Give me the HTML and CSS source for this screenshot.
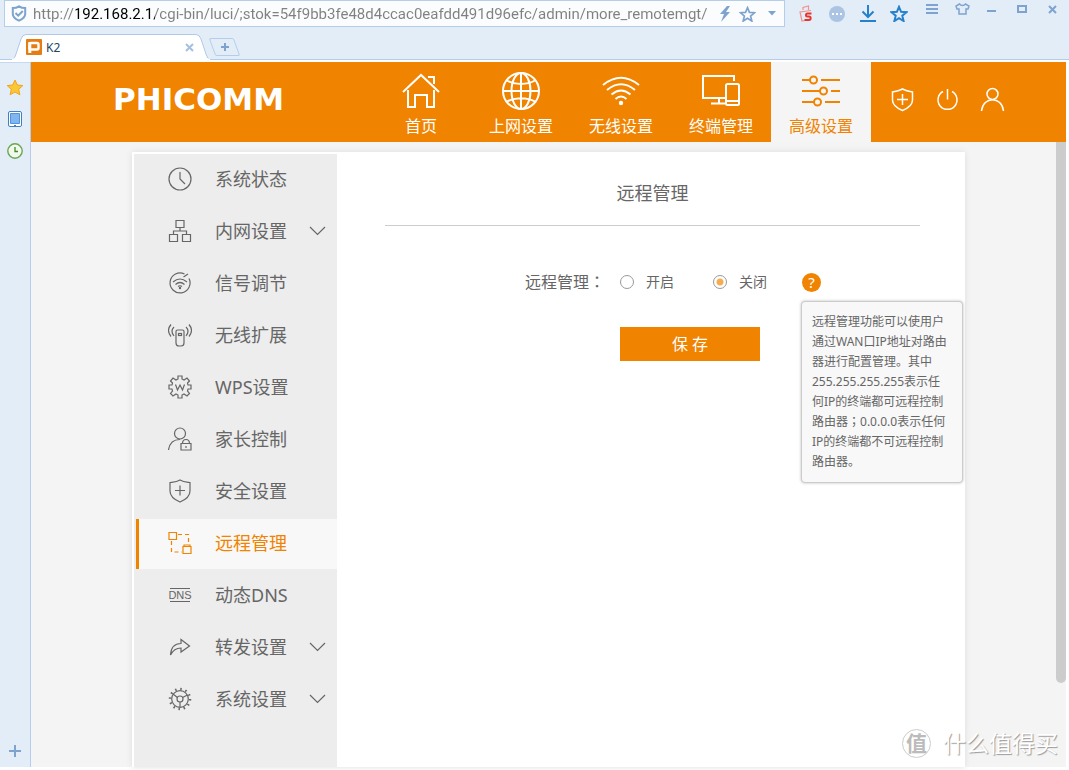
FILE: index.html
```html
<!DOCTYPE html>
<html lang="zh-CN">
<head>
<meta charset="utf-8">
<title>K2</title>
<link rel="stylesheet" href="styles.css">
</head>
<body>
<header class="browser">
  <div class="browser-row">
    <div class="address">
      <svg class="address-shield" width="16" height="17" viewBox="0 0 16 17" fill="none" stroke="#7fa3cf" stroke-width="2"><path d="M8 1.3C6 2.6 4 3 1.8 3v6c0 3 2.500 5 6.200 6.600C11.700 14 14.200 12 14.200 9V3C12 3 10 2.600 8 1.300z"/><path d="M4.500 8l2.700 2.700L11.800 6"/></svg>
      <input class="address-input" type="text" aria-label="地址栏" value="http://192.168.2.1/cgi-bin/luci/;stok=54f9bb3fe48d4ccac0eafdd491d96efc/admin/more_remotemgt/">
      <svg width="12" height="16" viewBox="0 0 12 16" fill="#7fa3cf"><path d="M8 0L1 8h4L2 16l9-10H7l4-6z"/></svg>
      <svg width="17" height="16" viewBox="0 0 18 17" fill="none" stroke="#7fa3cf" stroke-width="1.800"><path d="M9 1.800l2.100 5 5.300.4-4.100 3.500 1.300 5.300L9 13.100 4.400 16l1.300-5.300L1.600 7.200l5.300-.4z"/></svg>
      <svg class="address-caret" width="8" height="5" viewBox="0 0 8 5" fill="#7fa3cf"><path d="M0 0h8L4 4.500z"/></svg>
    </div>
    <div class="tools">
      <button class="tool" aria-label="搜狗"><svg width="14" height="18" viewBox="0 0 14 18" fill="none" stroke="#e8352c"><path d="M4 5V2.500L9.500 1v4M12 5.500L1 7l2 9 3-.5" stroke="#f0938d" stroke-width="1.200"/><path d="M12.500 8.500H8.500C6.500 8.500 6.500 11.500 8.500 11.500h1.500c2.200 0 2.200 3.500 0 3.500H5.500" stroke-width="2"/></svg></button>
      <button class="tool" aria-label="更多"><svg width="16" height="16" viewBox="0 0 16 16"><circle cx="8" cy="8" r="8" fill="#abc4e3"/><g fill="#fff"><rect x="3" y="7" width="2" height="2"/><rect x="7" y="7" width="2" height="2"/><rect x="11" y="7" width="2" height="2"/></g></svg></button>
      <button class="tool" aria-label="下载"><svg width="16" height="17" viewBox="0 0 16 17" fill="none" stroke="#2581cb" stroke-width="2"><path d="M0 16h16M8 0v12M2.500 6.500L8 12l5.500-5.500"/></svg></button>
      <button class="tool" aria-label="收藏"><svg width="18" height="17" viewBox="0 0 18 17" fill="none" stroke="#2581cb" stroke-width="2"><path d="M9 1.800l2.100 5 5.300.4-4.100 3.500 1.300 5.300L9 13.100 4.400 16l1.300-5.300L1.600 7.200l5.300-.4z"/></svg></button>
    </div>
    <div class="window-buttons">
      <button class="tool" aria-label="菜单"><svg width="12" height="10" viewBox="0 0 12 10" stroke="#7fa3cf" stroke-width="2"><path d="M0 1h12M0 5h12M0 9h12"/></svg></button>
      <button class="tool" aria-label="皮肤"><svg width="15" height="12" viewBox="0 0 15 12" fill="none" stroke="#7fa3cf" stroke-width="1.500"><path d="M4.500 1L1 3l1 3h2v5h7V6h2l1-3-3.500-2C9 3 6 3 4.500 1z"/></svg></button>
      <button class="tool" aria-label="最小化"><svg width="10" height="10" viewBox="0 0 10 10" stroke="#7fa3cf" stroke-width="2"><path d="M0 7h9"/></svg></button>
      <button class="tool" aria-label="最大化"><svg width="10" height="8" viewBox="0 0 10 8" fill="none" stroke="#7fa3cf" stroke-width="2"><path d="M1 1h8v6H1z"/></svg></button>
      <button class="tool" aria-label="关闭窗口"><svg width="9" height="9" viewBox="0 0 9 9" stroke="#7fa3cf" stroke-width="2"><path d="M1 1l7 7M8 1L1 8"/></svg></button>
    </div>
  </div>
  <div class="tabs">
    <div class="tab">
      <svg class="tab-shape" viewBox="0 0 198 26" preserveAspectRatio="none"><path d="M0 25.500C2 25 3 23 4 20L9 5Q10.500.500 14 .500H184Q187.500.500 189 5L194 20Q195.500 25 198 25.500V26H0z" fill="#fff" stroke="#afc9e8"/><path d="M0 25.500H198" stroke="#fff" stroke-width="2"/></svg>
      <svg width="16" height="16" viewBox="0 0 16 16"><rect width="16" height="16" rx="1" fill="#e57d12"/><rect x="3.500" y="4" width="9" height="6.500" rx="1.500" fill="none" stroke="#fff" stroke-width="2.400"/><path d="M2.300 3h3v11h-3z" fill="#fff"/></svg>
      <span class="tab-name">K2</span>
      <button class="tab-close" aria-label="关闭标签"><svg width="9" height="9" viewBox="0 0 9 9" stroke="#a5c0e0" stroke-width="2"><path d="M1 1l7 7M8 1L1 8"/></svg></button>
    </div>
    <button class="tab-new" aria-label="新建标签"><svg width="8" height="8" viewBox="0 0 8 8" stroke="#7fa3cf" stroke-width="2"><path d="M4 0v8M0 4h8"/></svg></button>
  </div>
</header>

<div class="window">
  <aside class="dock">
    <button class="dock-button" aria-label="收藏夹"><svg width="18" height="17" viewBox="0 0 18 17"><path d="M9 1l2.300 5 5.500.600-4.100 3.700 1.200 5.500L9 13l-4.900 2.800 1.200-5.500L1.200 6.600 6.700 6z" fill="#fcc735" stroke="#efa51c"/></svg></button>
    <button class="dock-button" aria-label="手机"><svg width="14" height="16" viewBox="0 0 14 16"><rect x=".5" y=".5" width="13" height="15" rx="1.500" fill="#fff" stroke="#3f7fc4"/><path d="M2.500 2.500h9v10h-9z" fill="#7fb6ef" stroke="#5593d8"/><path d="M6 14.500h2" stroke="#3f7fc4"/></svg></button>
    <button class="dock-button" aria-label="历史"><svg width="16" height="16" viewBox="0 0 16 16" fill="none"><circle cx="8" cy="8" r="7.200" fill="#f1f9ea" stroke="#6ba556" stroke-width="1.400"/><path d="M8 4v4.500h3" stroke="#418a2b" stroke-width="1.300"/></svg></button>
    <button class="dock-button dock-add" aria-label="添加"><svg width="12" height="12" viewBox="0 0 12 12" stroke="#7fa3cf" stroke-width="2"><path d="M6 0v12M0 6h12"/></svg></button>
  </aside>

  <div class="page">
    <header class="top">
      <a class="logo" href="#">PHICOMM</a>
      <nav class="nav">
        <a class="nav-item" href="#"><svg width="38" height="38" viewBox="0 0 38 38" fill="none" stroke="#fff" stroke-width="2"><path d="M1 20L19 3l18 17M6 18v17h7V23h12v12h7V18M26 5h6v7"/></svg>首页</a>
        <a class="nav-item" href="#"><svg width="38" height="38" viewBox="0 0 38 38" fill="none" stroke="#fff" stroke-width="2"><circle cx="19" cy="19" r="18"/><ellipse cx="19" cy="19" rx="9.500" ry="18"/><path d="M19 1v36M1 19h36M5 8.500c8 4.500 20 4.500 28 0M5 29.500c8-4.500 20-4.500 28 0"/></svg>上网设置</a>
        <a class="nav-item" href="#"><svg width="38" height="38" viewBox="0 0 38 38" fill="none" stroke="#fff" stroke-width="2"><path d="M1 13Q19-1.500 37 13M5 18q14-11.500 28 0M9.500 22.500q9.500-8 19 0M13.500 27q5.500-5 11 0"/><circle cx="19" cy="31" r="2.200" fill="#fff" stroke="none"/></svg>无线设置</a>
        <a class="nav-item" href="#"><svg width="38" height="38" viewBox="0 0 38 38" fill="none" stroke="#fff" stroke-width="2"><path d="M23 26H1V4h31v5M17 26v5M9 31.500h14"/><rect x="24" y="12" width="13" height="21" rx="1.500"/><path d="M24 29h13"/></svg>终端管理</a>
        <a class="nav-item nav-item-active" href="#"><svg width="38" height="38" viewBox="0 0 38 38" fill="none" stroke="#f08300" stroke-width="2"><path d="M0 8h8M19 8h19M0 19h18M29 19h9M0 30h12M23 30h15"/><circle cx="11.500" cy="8" r="3.500"/><circle cx="21.500" cy="19" r="3.500"/><circle cx="15.500" cy="30" r="3.500"/></svg>高级设置</a>
      </nav>
      <div class="quick">
        <button class="quick-button" aria-label="安全"><svg width="25" height="25" viewBox="0 0 25 25" fill="none" stroke="#fff" stroke-width="1.500"><path d="M12.500 2C9 4 6 4.500 2.500 5v8c0 5 4 8 10 10.500 6-2.500 10-5.500 10-10.500V5C19 4.500 16 4 12.500 2zM12.500 7v11M7 12.500h11"/></svg></button>
        <button class="quick-button" aria-label="退出"><svg width="25" height="25" viewBox="0 0 25 25" fill="none" stroke="#fff" stroke-width="1.500"><path d="M8 4.500a9.500 9.500 0 1 0 9 0M12.500 2v10.500"/></svg></button>
        <button class="quick-button" aria-label="用户"><svg width="25" height="25" viewBox="0 0 25 25" fill="none" stroke="#fff" stroke-width="1.500"><circle cx="12.500" cy="7" r="5.500"/><path d="M1.500 24c1.500-15 20.500-15 22 0"/></svg></button>
      </div>
    </header>

    <div class="panel">
      <nav class="side">
        <a class="side-item" href="#"><svg class="icon" viewBox="0 0 24 24"><circle cx="12" cy="12" r="11"/><path d="M12 5v7l5 5"/></svg>系统状态</a>
        <a class="side-item" href="#"><svg class="icon" viewBox="0 0 24 24"><path d="M8 1.500h8v7H8zM1.500 15.500h8v7h-8zM14.500 15.500h8v7h-8zM12 8.500V12M5.500 15.500V12h13v3.500"/></svg>内网设置<svg class="chevron" viewBox="0 0 17 10"><path d="M1 1l7.500 7.500L16 1"/></svg></a>
        <a class="side-item" href="#"><svg class="icon" viewBox="0 0 24 24"><path d="M16.500 3A10 10 0 1 0 21 7.500M15.500 6L20 3M5 11q7-6 14 0M7.500 13.500q4.500-4 9 0M10 15.500q2-1.500 4 0"/><circle cx="12" cy="17" r=".6"/></svg>信号调节</a>
        <a class="side-item" href="#"><svg class="icon" viewBox="0 0 24 24"><path d="M8 8.500q0-1.500 1.500-1.500h5q1.500 0 1.500 1.500V20q0 3-3 3h-2q-3 0-3-3z"/><rect x="10.500" y="10.500" width="3" height="2"/><path d="M6 4q-4 4 0 9M3 1.500q-5 6 0 12M18 4q4 4 0 9M21 1.500q5 6 0 12"/></svg>无线扩展</a>
        <a class="side-item" href="#"><svg class="icon" viewBox="0 0 24 24"><path d="M10 1h4v3l2 1 3-2 2.500 3L19.500 8l.5 2h3v4h-3l-.5 2 2 2.500L19 21l-3-2-2 1v3h-4v-3l-2-1-3 2-2.500-2.500 2-2.500L4 14H1v-4h3l.5-2-2-2L5 3l3 2 2-1z"/><path d="M7.500 9.500l2 5.500L12 10l2.500 5 2-5.500"/></svg>WPS设置</a>
        <a class="side-item" href="#"><svg class="icon" viewBox="0 0 24 24"><circle cx="12" cy="6.500" r="5.500"/><path d="M.5 23c1-7 5-10.500 11.500-10.500M13 16.500h10v6.500H13zM14.500 16.500q0-4 3.500-4t3.500 4M18 19v2"/></svg>家长控制</a>
        <a class="side-item" href="#"><svg class="icon" viewBox="0 0 24 24"><path d="M12 1C8.500 3 6 3 2 3.500V12c0 5.500 4 8.500 10 11 6-2.500 10-5.500 10-11V3.500C18 3 15.500 3 12 1zM12 6.500v10M7 11.500h10"/></svg>安全设置</a>
        <a class="side-item side-item-active" href="#" aria-current="page"><svg class="icon" viewBox="0 0 24 24"><path d="M1 1.500h7.500v7H1zM15 15.500h8v7h-8zM16 15.500V14h6v1.500"/><path d="M10 3.500h10.500V13M3.500 10v11H14" stroke-dasharray="4 3"/></svg>远程管理</a>
        <a class="side-item" href="#"><svg class="icon" viewBox="0 0 24 24"><path d="M2 5.500h20M2 18.500h20"/><text class="icon-text" x="12" y="16" text-anchor="middle">DNS</text></svg>动态DNS</a>
        <a class="side-item" href="#"><svg class="icon" viewBox="0 0 24 24"><path d="M2.500 20C3 12 6 8.500 13 8.500v-4L21.500 11 13 17v-4c-5 0-8 2-10.500 7z"/></svg>转发设置<svg class="chevron" viewBox="0 0 17 10"><path d="M1 1l7.500 7.500L16 1"/></svg></a>
        <a class="side-item" href="#"><svg class="icon" viewBox="0 0 24 24"><circle cx="12" cy="12" r="10" stroke-width="2.500" stroke-dasharray="1.500 3.730"/><circle cx="12" cy="12" r="8.300"/><circle cx="12" cy="12" r="3"/><path d="M9.500 10.500L5 7M14.500 10.500L19.500 8M12 15v5"/></svg>系统设置<svg class="chevron" viewBox="0 0 17 10"><path d="M1 1l7.500 7.500L16 1"/></svg></a>
      </nav>

      <main class="content">
        <h1 class="title">远程管理</h1>
        <form class="form">
          <span class="form-label" id="remote-label">远程管理<span class="mark" lang="zh-TW">：</span></span>
          <div class="choices" role="radiogroup" aria-labelledby="remote-label">
            <label class="choice"><input class="radio" type="radio" name="remote">开启</label>
            <label class="choice"><input class="radio" type="radio" name="remote" checked>关闭</label>
            <div class="help">
              <button class="help-button" type="button" aria-label="帮助" aria-describedby="remote-tip">?</button>
              <div class="tip" id="remote-tip" role="tooltip">远程管理功能可以使用户<br>通过WAN口IP地址对路由<br>器进行配置管理。其中<br>255.255.255.255表示任<br>何IP的终端都可远程控制<br>路由器<span class="mark" lang="zh-TW">；</span>0.0.0.0表示任何<br>IP的终端都不可远程控制<br>路由器。</div>
            </div>
          </div>
          <button class="save" type="button">保 存</button>
        </form>
      </main>
    </div>
    <div class="scroll-thumb"></div>
    <div class="watermark"><span class="watermark-seal">值</span>什么值得买</div>
  </div>
</div>
</body>
</html>
```
FILE: styles.css
```css
* { box-sizing: border-box; }

body {
  margin: 0;
  min-height: 100vh;
  display: flex;
  flex-direction: column;
  background: #fff;
  color: #666;
  font-family: "Noto Sans", "Noto Sans CJK SC", sans-serif;
}

button {
  border: 0;
  padding: 0;
  background: none;
  color: inherit;
  font: inherit;
  cursor: pointer;
}

a { color: inherit; text-decoration: none; }
svg { display: block; flex: none; }

/* Browser frame */
.browser {
  background: #e3edf7;
  border-bottom: 2px solid #fff;
}

.browser-row { display: flex; height: 27px; padding-left: 4px; }

.address {
  flex: 1;
  display: flex;
  align-items: center;
  padding: 0 8px 0 6px;
  background: #fafcfe;
  border: 1px solid #b5cde9;
}

.address-input {
  flex: 1;
  min-width: 0;
  margin-left: 6px;
  padding: 0;
  border: 0;
  outline: 0;
  font: 15px/20px Roboto, sans-serif;
  color: #808080;
  background: linear-gradient(to right, #808080 43px, #000 43px, #000 122px, #808080 122px);
  -webkit-background-clip: text;
  background-clip: text;
  -webkit-text-fill-color: transparent;
}

.address > svg + svg { margin-left: 8px; }
.address > .address-caret { margin-left: 12px; }

.tools { display: flex; padding-left: 5px; }
.window-buttons { display: flex; height: 18px; padding: 0 2px 0 3px; }

.tool {
  width: 31px;
  display: flex;
  align-items: center;
  justify-content: center;
}
.window-buttons .tool { width: 30px; }

.tabs {
  display: flex;
  align-items: flex-end;
  gap: 2px;
  height: 33px;
  padding-left: 12px;
  border-bottom: 1px solid #b5cde9;
}

.tab {
  position: relative;
  display: flex;
  align-items: center;
  width: 198px;
  height: 26px;
  margin-bottom: -1px;
  padding: 0 16px 0 14px;
}
.tab > * { position: relative; }
.tab > .tab-shape {
  position: absolute;
  inset: 0;
  width: 100%;
  height: 100%;
}
.tab-name { margin-left: 4px; font-size: 12px; color: #1d4568; }
.tab-close { margin-left: auto; }

.tab-new {
  display: flex;
  align-items: center;
  justify-content: center;
  width: 25px;
  height: 18px;
  margin-bottom: 3px;
  border: 1px solid #b5cde9;
  border-radius: 2px;
  transform: skewX(20deg);
}
.tab-new svg { transform: skewX(-20deg); }

.window { flex: 1; display: flex; padding: 0 3px 3px 0; }

.dock {
  width: 31px;
  display: flex;
  flex-direction: column;
  padding: 8px 0 0;
  background: #e3edf7;
  border-top: 1px solid #c5d9ef;
  border-right: 1px solid #b5cdf0;
}
.dock-button {
  display: flex;
  align-items: center;
  justify-content: center;
  height: 32px;
}
.dock-add { margin-top: auto; }

/* Router page */
.page {
  position: relative;
  flex: 1;
  display: flex;
  flex-direction: column;
  background: #f4f4f4;
}

.top {
  display: flex;
  align-items: center;
  height: 80px;
  padding: 0 61px 0 82px;
  background: #f08300;
  color: #fff;
}

.logo { padding-bottom: 6px; font: bold 31px/36px "DejaVu Sans", sans-serif; }

.nav { display: flex; height: 100%; margin-left: auto; }
.nav-item {
  display: flex;
  flex-direction: column;
  align-items: center;
  width: 100px;
  padding-top: 10px;
  font-size: 16px;
  line-height: 24px;
}
.nav-item svg { margin-bottom: 4px; }
.nav-item-active { background: #f5f5f5; color: #f08300; }

.quick { display: flex; gap: 20px; margin-left: 19px; padding-bottom: 6px; }

.panel {
  flex: 1;
  display: flex;
  width: 100%;
  max-width: 833px;
  margin: 10px auto 0;
  padding: 2px 0 0 2px;
  background: #fff;
  box-shadow: 0 0 6px #ddd;
}

.side {
  width: 203px;
  display: flex;
  flex-direction: column;
  gap: 2px;
  padding: 1px 0 0 2px;
  background: #ededed;
}

.side-item {
  display: flex;
  align-items: center;
  height: 50px;
  padding: 0 11px 2px 29px;
  border-left: 3px solid transparent;
  font-size: 18px;
  line-height: 28px;
}
.side-item-active {
  background: #f8f8f8;
  border-left-color: #f08300;
  color: #f08300;
}

.icon {
  width: 24px;
  height: 24px;
  margin-right: 23px;
  fill: none;
  stroke: currentColor;
  stroke-width: 1.2;
}
.icon-text { font: 11px "Liberation Sans", sans-serif; fill: currentColor; stroke: none; }
.chevron {
  width: 17px;
  height: 10px;
  margin-left: auto;
  fill: none;
  stroke: currentColor;
  stroke-width: 1.2;
}

.content { flex: 1; padding: 0 45px 0 48px; }

.title {
  margin: 0;
  padding: 25px 0 18px;
  border-bottom: 1px solid #ccc;
  font-size: 18px;
  font-weight: 400;
  line-height: 28px;
  text-align: center;
}

.form {
  display: grid;
  grid-template-columns: 220px 1fr;
  gap: 33px 15px;
  padding-top: 44px;
}
.form-label { font-size: 16px; line-height: 24px; text-align: right; }
.mark { font-family: "Noto Sans CJK TC", sans-serif; line-height: 1; }

.choices { display: flex; align-items: center; }
.choice { display: flex; align-items: center; gap: 12px; width: 93px; font-size: 14px; line-height: 20px; }

.radio {
  appearance: none;
  width: 14px;
  height: 14px;
  margin: 0;
  border: 1px solid #999;
  border-radius: 50%;
  background: #fff;
}
.radio:checked { background: radial-gradient(circle, #f6ad52 3px, #fff 4px); }

.help { position: relative; display: flex; margin-left: -4px; }
.help-button {
  width: 19px;
  height: 19px;
  border-radius: 50%;
  background: #f08300;
  color: #fff;
  font-size: 15px;
  line-height: 19px;
}
.tip {
  position: absolute;
  top: 28px;
  left: -1px;
  width: 162px;
  padding: 10px;
  border: 1px solid #ccc;
  border-radius: 4px;
  background: #f8f8f8;
  box-shadow: 0 0 3px #bbb;
  font-size: 12px;
  line-height: 20px;
  white-space: nowrap;
}

.save {
  grid-column: 2;
  width: 140px;
  height: 34px;
  padding-bottom: 2px;
  background: #f08300;
  color: #fff;
  font-size: 16px;
}

.scroll-thumb {
  position: absolute;
  top: 80px;
  right: 0;
  bottom: 84px;
  width: 10px;
  background: #ccc;
  border-radius: 0 0 5px 5px;
}

.watermark {
  position: absolute;
  right: 8px;
  bottom: 9px;
  display: flex;
  align-items: center;
  gap: 12px;
  color: #fff;
  font-size: 23px;
  line-height: 30px;
  text-shadow: 1px 1px 1px #999;
}
.watermark-seal {
  width: 29px;
  height: 29px;
  border: 1px solid #ccc;
  border-radius: 50%;
  background: #fff;
  color: #bbb;
  font-size: 21px;
  font-weight: 700;
  line-height: 27px;
  text-align: center;
  text-shadow: none;
}
```
